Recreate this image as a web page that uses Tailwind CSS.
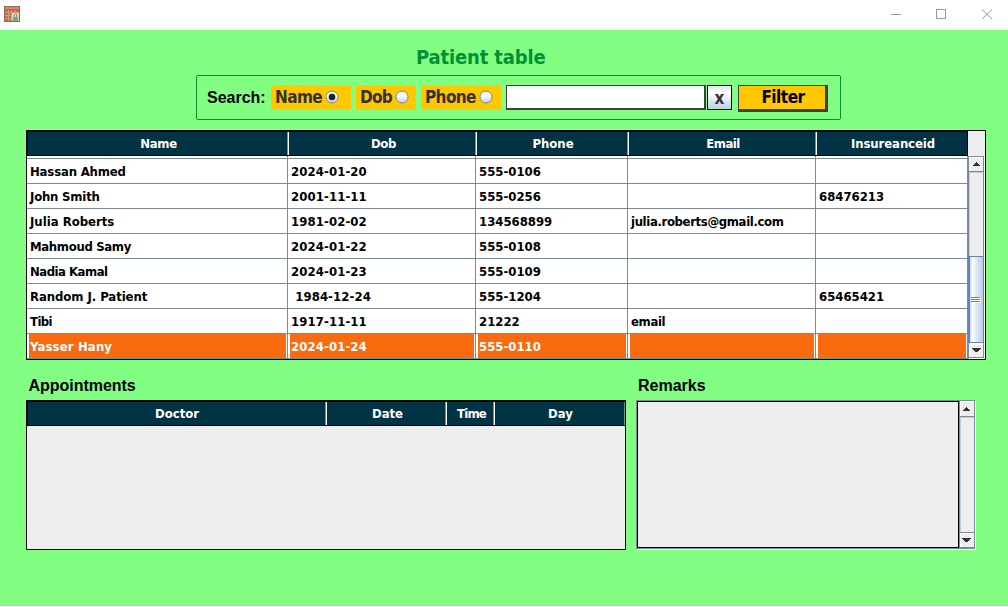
<!DOCTYPE html>
<html lang="en">
<head>
<meta charset="utf-8">
<title>Patient table</title>
<script src="https://cdn.jsdelivr.net/npm/@tailwindcss/browser@4"></script>
</head>
<body class="w-[1008px] h-[607px] overflow-hidden bg-white flex flex-col text-black font-bold text-[13px] [font-family:'DejaVu_Sans_Condensed','DejaVu_Sans',sans-serif] [font-stretch:condensed]">
<header class="h-[30px] shrink-0 flex items-start">
  <svg class="ml-1 mt-1.5 size-4" viewBox="0 0 16 16" shape-rendering="crispEdges">
    <rect width="16" height="16" fill="#80705a"/><rect x="1" y="1" width="14" height="2" fill="#e8826b"/>
    <rect x="1" y="3" width="14" height="1" fill="#8f7556"/>
    <path d="M1 4h14v11H1z" fill="#c9a37c"/>
    <path d="M1 4h3v2H1zM5 4h2v2H5zM8 4h3v2H8zM12 4h3v2h-3zM1 7h3v2H1zM5 7h2v2H5zM1 10h3v2H1zM5 10h2v2H5zM1 13h3v2H1zM5 13h2v2H5z" fill="#d65f57"/>
    <path d="M8 7h7v8H8z" fill="#efd184"/><path d="M11 7h1v1h1v3h1v4H9v-4h1V8h1z" fill="#6fa5ae"/><path d="M11 8h1v3h-1z" fill="#c9dedb"/>
  </svg>
  <span class="grow"></span>
  <svg class="w-[138px] h-[30px]" viewBox="0 0 138 30" fill="none" stroke="#999">
    <path d="M21 14.500h10M66.500 9.500h9v9h-9z" shape-rendering="crispEdges"/><path d="M112 9.500l10 9.500M122 9.500l-10 9.500"/>
  </svg>
</header>
<main class="h-[576px] bg-[#82ff82] flex flex-col">
  <h1 class="h-[45px] pl-[416px] pt-[12px] text-[20px] leading-[30px] text-[#009136] whitespace-nowrap"><span class="tracking-[-0.15px]">Patient table</span></h1>
  <section class="ml-[196px] w-[645px] h-[45px] border border-[#009136] rounded-[2px] flex items-start pt-[9px] pl-[10px] text-[17px] leading-[24px] text-[#333] whitespace-nowrap">
    <span class="w-16 text-black text-[16px] leading-[25px] [font-family:'Liberation_Sans',sans-serif]">Search:</span>
    <label class="w-20 h-[25px] bg-[#ffc800] flex pl-1 mr-[5px]"><span class="w-[50px] tracking-[-0.6px]">Name</span><svg class="size-[14px] mt-[5px]" viewBox="0 0 14 14"><circle cx="7" cy="7" r="6" fill="url(#ball)" stroke="#7a8a99"/><circle cx="7" cy="7" r="3.300" fill="#222"/></svg></label>
    <label class="w-[60px] h-[25px] bg-[#ffc800] flex pl-1 mr-[5px]"><span class="w-[35px] tracking-[-0.7px]">Dob</span><svg class="size-[14px] mt-[5px]" viewBox="0 0 14 14"><circle cx="7" cy="7" r="6" fill="url(#ball)" stroke="#7a8a99"/></svg></label>
    <label class="w-20 h-[25px] bg-[#ffc800] flex pl-1 mr-[5px]"><span class="w-[54px] tracking-[-0.6px]">Phone</span><svg class="size-[14px] mt-[5px]" viewBox="0 0 14 14"><defs><linearGradient id="ball" x2="0" y2="1"><stop stop-color="#dce8f3"/><stop offset=".4" stop-color="#fff"/><stop offset="1" stop-color="#b8cfe5"/></linearGradient></defs><circle cx="7" cy="7" r="6" fill="url(#ball)" stroke="#7a8a99"/></svg></label>
    <div class="w-[200px] h-[25px] bg-white border border-r-2 border-b-2 border-[#404040]"></div>
    <div class="ml-px w-[25px] h-[25px] border border-black bg-linear-to-b from-[#dde8f3] via-white via-30% to-[#b8cfe5] text-center leading-[24px]">x</div>
    <div class="ml-1.5 w-[90px] h-[27px] bg-[#ffc800] border border-r-3 border-b-3 border-[#404040] text-black text-center leading-[22px] pl-0.5 tracking-[-0.5px]">Filter</div>
  </section>

  <section class="ml-[26px] mt-[10px] w-[960px] h-[230px] border border-black bg-white flex">
    <div class="w-[941px] leading-[26px] whitespace-nowrap">
      <div class="h-[25px] border border-black bg-[#003344] text-white text-center leading-[23px] grid grid-cols-[260px_188px_152px_188px_151px]">
        <div class="border-r border-[#7a8a99] pl-[2px] tracking-[-0.3px]">Name</div><div class="border-l border-l-white border-r border-r-[#7a8a99] pl-[3px] tracking-[-0.3px]">Dob</div><div class="border-l border-l-white border-r border-r-[#7a8a99] pl-[2px]">Phone</div><div class="border-l border-l-white border-r border-r-[#7a8a99] pl-[2px] tracking-[-0.5px]">Email</div><div class="border-l border-white pl-[2px] tracking-[-0.1px]">Insureanceid</div>
      </div>
      <div id="rows"></div>
    </div>
    <div class="w-[17px] flex flex-col">
      <div class="h-[25px] bg-[#eee]"></div>
      <svg class="w-[17px] h-[203px]" viewBox="0 0 17 203" shape-rendering="crispEdges">
        <defs><linearGradient id="thumb"><stop stop-color="#c5d8ea"/><stop offset=".2" stop-color="#fff"/><stop offset=".5" stop-color="#dce8f3"/><stop offset="1" stop-color="#b8cfe5"/></linearGradient></defs>
        <path d="M0 0h17v203H0z" fill="#fff"/><path d="M2 2h13v13H2zM2 17h13v83H2zM2 189h13v12H2z" fill="#eee"/>
        <path d="M0 0h1v203H0zM0 0h16v1H0zM15 0h1v202h-1zM1 15h15v1H1zM1 201h15v1H1z" fill="#7a8a99"/>
        <path d="M1 16h14v1H1zM1 16h1v84H1z" fill="#b8cfe5"/>
        <path d="M0 100h16v87H0z" fill="#6382bf"/><path d="M2 101h13v85H2z" fill="url(#thumb)"/>
        <path d="M3 141h9v1H3zM3 143h9v1H3zM3 145h9v1H3z" fill="#6382bf"/><path d="M4 142h9v1H4zM4 144h9v1H4zM4 146h9v1H4z" fill="#fff"/>
        <path d="M8 6h1v1h1v1h1v1h1v1H5V9h1V8h1V7h1zM4 192h9v1h-1v1h-1v1h-1v1H7v-1H6v-1H5v-1H4z" fill="#333"/>
      </svg>
    </div>
  </section>

  <div class="h-[40px] flex text-[16px] leading-[22px] pt-[15px] [font-family:'Liberation_Sans',sans-serif]"><h2 class="pl-[28.5px] w-[638px] tracking-[-0.03px]">Appointments</h2><h2>Remarks</h2></div>
  <section class="flex pl-[26px] gap-[10px]">
    <div class="w-[600px] h-[150px] border border-black bg-[#eee]">
      <div class="h-[25px] border-y border-l border-black bg-[#003344] text-white text-center leading-[23px] grid grid-cols-[298px_120px_48px_131px]">
        <div class="border-r border-[#7a8a99] pl-px">Doctor</div><div class="border-l border-l-white border-r border-r-[#7a8a99] pl-[3px]">Date</div><div class="border-l border-l-white border-r border-r-[#7a8a99] pl-[3px] tracking-[-0.8px]">Time</div><div class="border-l border-l-white border-r border-r-[#7a8a99] pl-[2px]">Day</div>
      </div>
    </div>
    <div class="w-[340px] h-[150px] border border-t-[#7a8a99] border-l-[#7a8a99] border-r-white border-b-white flex bg-[#7a8a99]">
      <div class="w-[322px] h-[147px] border border-black bg-[#eee]"></div>
      <svg class="ml-px w-[15px] h-[148px]" viewBox="0 0 15 148" shape-rendering="crispEdges">
        <path d="M0 0h15v148H0z" fill="#eee"/><path d="M0 0h14v1H0zM0 0h1v15H0zM0 132h14v1H0zM0 132h1v14H0z" fill="#fff"/>
        <path d="M14 0h1v148h-1zM0 15h15v1H0zM0 131h15v1H0zM0 146h15v2H0z" fill="#7a8a99"/><path d="M0 16h14v1H0zM0 16h1v115H0z" fill="#b8cfe5"/>
        <path d="M6 6h1v1h1v1h1v1h1v1H3V9h1V8h1V7h1zM2 137h9v1h-1v1H9v1H8v1H5v-1H4v-1H3v-1H2z" fill="#333"/>
      </svg>
    </div>
  </section>
</main>
<script>
const rows = [
  ['Hassan Ahmed','2024-01-20','555-0106','',''],
  ['John Smith','2001-11-11','555-0256','','68476213'],
  ['Julia Roberts','1981-02-02','134568899','julia.roberts@gmail.com',''],
  ['Mahmoud Samy','2024-01-22','555-0108','',''],
  ['Nadia Kamal','2024-01-23','555-0109','',''],
  ['Random J. Patient','\u00a01984-12-24','555-1204','','65465421'],
  ['Tibi','1917-11-11','21222','email',''],
  ['Yasser Hany','2024-01-24','555-0110','','']
];
// Letter spacing of each name, then of the other columns
const nameTracking = ['tracking-[-0.17px]','tracking-[-0.2px]','tracking-[0px]','tracking-[-0.33px]','tracking-[-0.5px]','tracking-[-0.06px]','tracking-[-0.6px]','tracking-[0.15px]'];
const colTracking = ['', 'tracking-[0.1px]', '', 'tracking-[-0.36px]', ''];
const grid = 'grid grid-cols-[261px_188px_152px_188px_152px]';
const line = '<div class="border-r border-b border-[#7a8a99]"></div>';
document.getElementById('rows').innerHTML =
  '<div class="' + grid + ' h-[3px]">' + line.repeat(5) + '</div>' +
  rows.map((r, i) => '<div class="' + grid + ' h-[25px]">' + r.map((c, j) => {
    const t = j ? colTracking[j] : nameTracking[i];
    return i === 7
      ? '<div class="border-r border-b border-[#7a8a99] pl-0.5 pr-px h-[25px]"><div class="bg-[#fa6b10] text-white h-6 pl-px ' + t + '">' + c + '</div></div>'
      : '<div class="border-r border-b border-[#7a8a99] pl-[3px] h-[25px] ' + t + '">' + c + '</div>';
  }).join('') + '</div>').join('');
</script>
</body>
</html>
